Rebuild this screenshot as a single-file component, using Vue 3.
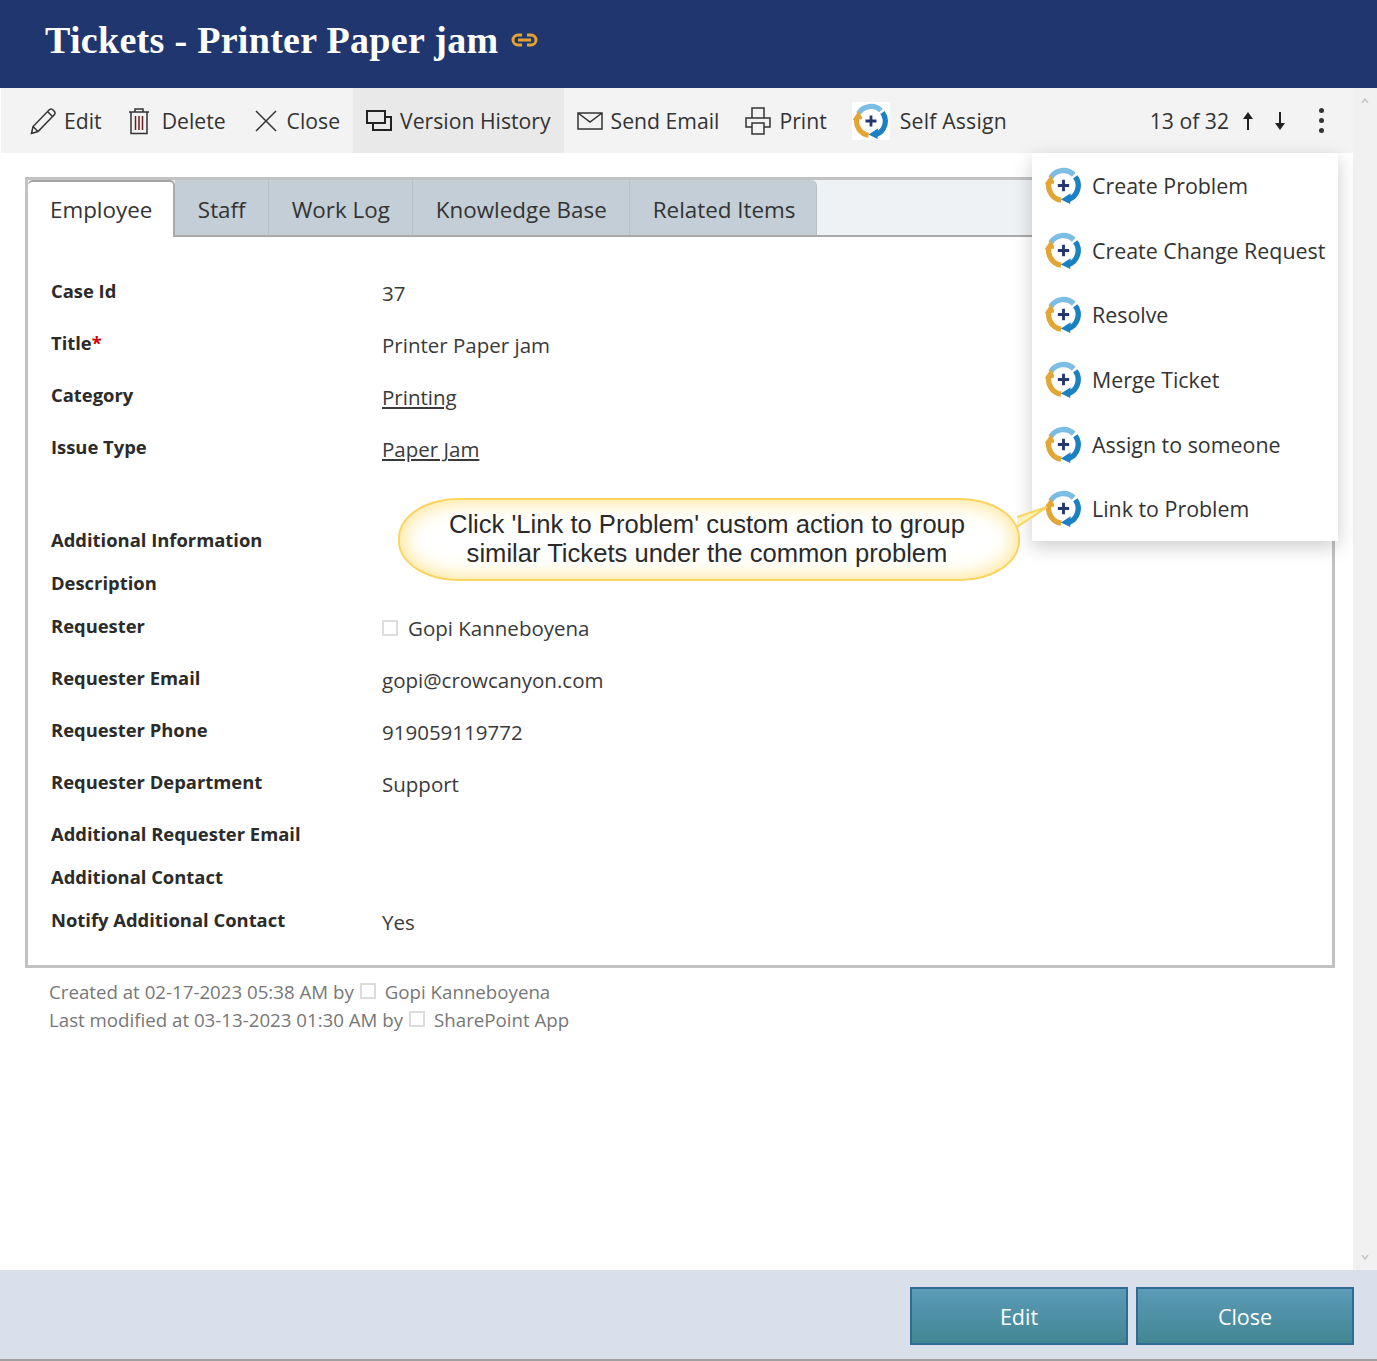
<template>
  <div class="pagina">
    <svg width="0" height="0" class="defs">
      <symbol id="anel" viewBox="0 0 36 36">
        <path d="M5.5 10.5A14.5 14.5 0 0 1 28 7.5" fill="none" stroke="#7dbde3" stroke-width="5.2" />
        <path d="M29.5 9.5A14.5 14.5 0 0 1 23 31.6" fill="none" stroke="#1b80c4" stroke-width="5.2" />
        <path d="M25 25.5L24.5 36L15.5 31.5Z" fill="#1b80c4" />
        <path d="M15.6 32.3A14.5 14.5 0 0 1 3.8 15" fill="none" stroke="#e3a635" stroke-width="5.2" />
        <path d="M-0.5 17L10 16L5.5 8Z" fill="#e3a635" />
        <circle cx="18" cy="18" r="9.5" fill="#fff" />
        <path d="M18 12.5V23.5M12.5 18H23.5" stroke="#24386f" stroke-width="2.8" />
      </symbol>
    </svg>

    <header class="cabecalho">
      <h1>Tickets - Printer Paper jam</h1>
      <svg class="elo" width="27" height="14" viewBox="0 0 27 14" fill="none" stroke="#e5a32b" stroke-width="3">
        <path d="M11 2H7a5 5 0 0 0 0 10h4M16 2h4a5 5 0 0 1 0 10h-4M7 7h13" />
      </svg>
    </header>

    <div class="meio">
      <div class="coluna">
        <nav class="barra">
          <a class="acao">
            <svg width="26" height="28" viewBox="0 0 26 28" fill="none" stroke="#333" stroke-width="1.5"><path d="M1.5 26.5L3 19.5L19.5 2.5Q21 1.5 22.5 2.5L24.5 4.5Q25.5 6 24.5 7.5L8 24.5ZM3 19.5L8 24.5M17.5 4.5L22.5 9.5" /></svg>
            Edit
          </a>
          <a class="acao lixeira">
            <svg width="22" height="28" viewBox="0 0 22 28" fill="none" stroke="#333" stroke-width="1.5"><path d="M1 5H21M7 5V2H15V5M3 5V26.5H19V5" /><path d="M7.5 9V23M11 9V23M14.5 9V23" stroke="#6b1d22" /></svg>
            Delete
          </a>
          <a class="acao fechar">
            <svg width="22" height="22" viewBox="0 0 22 22" fill="none" stroke="#333" stroke-width="1.5"><path d="M1 1L21 21M21 1L1 21" /></svg>
            Close
          </a>
          <a class="acao ativa">
            <svg width="26" height="24" viewBox="0 0 26 24" fill="none" stroke="#222" stroke-width="2"><path d="M1 2H19V14H1ZM7 14V21H25V8H19" /></svg>
            Version History
          </a>
          <a class="acao email">
            <svg width="26" height="18" viewBox="0 0 26 18" fill="none" stroke="#333" stroke-width="1.5"><path d="M1 1H25V17H1ZM1 1L13 10L25 1" /></svg>
            Send Email
          </a>
          <a class="acao">
            <svg width="26" height="28" viewBox="0 0 26 28" fill="none" stroke="#333" stroke-width="1.5"><path d="M7 11V1H19V11M7 20H1V11H25V20H19M7 16H19V27H7Z" /></svg>
            Print
          </a>
          <a class="acao assumir">
            <span class="fundo-anel"><svg width="36" height="36"><use href="#anel" /></svg></span>
            Self Assign
          </a>
          <div class="navegacao">
            <span class="contagem">13 of 32</span>
            <svg width="12" height="20" viewBox="0 0 12 20" fill="#222"><path d="M6 1L11 8H7V19H5V8H1Z" /></svg>
            <svg width="12" height="20" viewBox="0 0 12 20" fill="#222"><path d="M6 19L1 12H5V1H7V12H11Z" /></svg>
            <span class="pontos"><i></i><i></i><i></i></span>
          </div>
        </nav>

        <main class="conteudo">
          <section class="moldura">
            <div class="abas">
              <span v-for="(aba, i) in abas" :key="aba" class="aba" :class="{ selecionada: i === 0 }">{{ aba }}</span>
            </div>
            <div class="formulario">
              <div v-for="campo in campos" :key="campo.rotulo" class="linha" :class="{ vazia: !campo.valor, afastada: campo.afastada }">
                <strong class="rotulo">{{ campo.rotulo }}<em v-if="campo.obrigatorio">*</em></strong>
                <span v-if="campo.valor" class="valor">
                  <i v-if="campo.foto" class="foto"></i>
                  <u v-if="campo.link">{{ campo.valor }}</u>
                  <template v-else>{{ campo.valor }}</template>
                </span>
              </div>
            </div>
          </section>
          <div class="rodape-info">
            <p>Created at 02-17-2023 05:38 AM by<i class="foto"></i>Gopi Kanneboyena</p>
            <p>Last modified at 03-13-2023 01:30 AM by<i class="foto"></i>SharePoint App</p>
          </div>
        </main>

        <ul class="menu">
          <li v-for="item in menu" :key="item">
            <svg width="37" height="37"><use href="#anel" /></svg>
            {{ item }}
          </li>
        </ul>

        <div class="balao">
          Click 'Link to Problem' custom action to group<br />
          similar Tickets under the common problem
        </div>
        <svg class="rabo" width="32" height="22" viewBox="0 0 32 22">
          <path d="M0 11L30 1L0 21" fill="#fff1b8" stroke="#fbd35f" stroke-width="2" />
        </svg>
      </div>

      <aside class="rolagem">
        <svg width="8" height="5" viewBox="0 0 8 5" fill="none" stroke="#c4c4c4" stroke-width="1.4"><path d="M1 5L4 1L7 5" /></svg>
        <svg width="8" height="5" viewBox="0 0 8 5" fill="none" stroke="#c4c4c4" stroke-width="1.4"><path d="M1 0L4 4L7 0" /></svg>
      </aside>
    </div>

    <footer class="rodape">
      <button class="botao">Edit</button>
      <button class="botao">Close</button>
    </footer>
    <div class="tira"></div>
  </div>
</template>

<script setup>
const abas = ["Employee", "Staff", "Work Log", "Knowledge Base", "Related Items"];

const menu = [
  "Create Problem",
  "Create Change Request",
  "Resolve",
  "Merge Ticket",
  "Assign to someone",
  "Link to Problem",
];

const campos = [
  { rotulo: "Case Id", valor: "37" },
  { rotulo: "Title", valor: "Printer Paper jam", obrigatorio: true },
  { rotulo: "Category", valor: "Printing", link: true },
  { rotulo: "Issue Type", valor: "Paper Jam", link: true },
  { rotulo: "Additional Information", afastada: true },
  { rotulo: "Description" },
  { rotulo: "Requester", valor: "Gopi Kanneboyena", foto: true },
  { rotulo: "Requester Email", valor: "gopi@crowcanyon.com" },
  { rotulo: "Requester Phone", valor: "919059119772" },
  { rotulo: "Requester Department", valor: "Support" },
  { rotulo: "Additional Requester Email" },
  { rotulo: "Additional Contact" },
  { rotulo: "Notify Additional Contact", valor: "Yes" },
];
</script>

<style>
html,
body {
  margin: 0;
  background: #fff;
}
</style>

<style scoped>
.pagina {
  width: 1377px;
  height: 1361px;
  display: flex;
  flex-direction: column;
  overflow: hidden;
  font-family: "Open Sans", "Noto Sans", sans-serif;
  color: #333;
}

.defs {
  position: absolute;
}

.cabecalho {
  height: 88px;
  flex: none;
  display: flex;
  align-items: center;
  gap: 13px;
  padding: 0 0 8px 45px;
  box-sizing: border-box;
  background: #1f366f;
}
.cabecalho h1 {
  margin: 0;
  font: bold 38px "Liberation Serif", serif;
  letter-spacing: 0.3px;
  color: #fff;
}

.meio {
  flex: 1;
  display: flex;
  min-height: 0;
}
.coluna {
  position: relative;
  flex: 1;
  display: flex;
  flex-direction: column;
}

.barra {
  height: 65px;
  flex: none;
  display: flex;
  align-items: stretch;
  padding-left: 16px;
  margin-left: 1px;
  background: #f3f3f3;
  font-size: 21.2px;
}
.acao {
  display: flex;
  align-items: center;
  gap: 8px;
  padding: 0 13px;
}
.lixeira {
  gap: 12px;
}
.fechar {
  gap: 10px;
  padding-left: 14px;
}
.fechar svg {
  margin-left: 2px;
}
.email {
  gap: 8px;
}
.ativa {
  background: #e9e9e9;
}
.assumir {
  gap: 10px;
  padding-left: 12px;
  letter-spacing: 0.2px;
}
.fundo-anel {
  display: flex;
  padding: 1px;
  background: #fff;
}
.navegacao {
  margin-left: auto;
  display: flex;
  align-items: center;
  gap: 20px;
  padding-right: 29px;
}
.contagem {
  margin-right: -7px;
}
.pontos {
  display: flex;
  flex-direction: column;
  gap: 5px;
  margin-left: 13px;
}
.pontos i {
  width: 5px;
  height: 5px;
  border-radius: 50%;
  background: #333;
}

.conteudo {
  flex: 1;
  padding: 24px 18px 0 25px;
}
.moldura {
  border: 3px solid #c2c2c2;
  height: 791px;
  box-sizing: border-box;
}
.abas {
  display: flex;
  height: 57px;
  background: #eff2f5;
  border-bottom: 2px solid #a9a9a9;
  box-sizing: border-box;
  font-size: 22.4px;
}
.aba {
  display: flex;
  align-items: center;
  padding: 3px 22.5px 0;
  background: #c3ced6;
  border-right: 1px solid #b8c0c6;
}
.aba:last-child {
  padding-right: 20.5px;
  border-radius: 0 6px 0 0;
}
.selecionada {
  background: #fff;
  height: 57px;
  box-sizing: border-box;
  border-top: 2px solid #a5a5a5;
  border-right: 2px solid #a9a9a9;
  border-radius: 5px 5px 0 0;
  padding: 0 21px 0 22px;
}

.formulario {
  padding: 42px 23px 0;
}
.linha {
  display: flex;
  height: 52px;
}
.vazia {
  height: 43px;
}
.afastada {
  margin-top: 41px;
}
.rotulo {
  width: 331px;
  flex: none;
  font-size: 18.4px;
  line-height: 24px;
  color: #2b2b2b;
}
.rotulo em {
  font-style: normal;
  color: #d40000;
}
.valor {
  display: flex;
  align-items: center;
  height: 28px;
  font-size: 20.5px;
  color: #3a3a3a;
}
.foto {
  display: inline-block;
  width: 12px;
  height: 12px;
  border: 2px solid #dcdcdc;
  margin-right: 10px;
}

.rodape-info {
  padding: 10px 0 0 24px;
  font-size: 18.7px;
  color: #777;
}
.rodape-info p {
  margin: 0;
  line-height: 28px;
}
.rodape-info .foto {
  margin: 0 9px 0 6px;
}

.menu {
  position: absolute;
  top: 65px;
  left: 1032px;
  width: 306px;
  height: 388px;
  box-sizing: border-box;
  margin: 0;
  padding: 0 0 0 13px;
  list-style: none;
  background: #fff;
  box-shadow: 0 6px 18px rgba(0, 0, 0, 0.2);
  font-size: 21.4px;
}
.menu li {
  display: flex;
  align-items: center;
  gap: 10px;
  height: 64.7px;
}

.balao {
  position: absolute;
  top: 410px;
  left: 398px;
  width: 622px;
  height: 83px;
  box-sizing: border-box;
  display: flex;
  align-items: center;
  justify-content: center;
  padding: 0 4px 2px 0;
  text-align: center;
  font: 25.6px/29px "Liberation Sans", sans-serif;
  color: #2a2a2a;
  background: #fff;
  border: 2px solid #fbd35f;
  border-radius: 60px / 40px;
  box-shadow: inset 0 0 22px #ffdf7a;
}
.rabo {
  position: absolute;
  top: 418px;
  left: 1017px;
}

.rolagem {
  width: 24px;
  flex: none;
  display: flex;
  flex-direction: column;
  align-items: center;
  justify-content: space-between;
  padding: 10px 0;
  box-sizing: border-box;
  background: #f1f1f1;
}

.rodape {
  height: 89px;
  flex: none;
  display: flex;
  justify-content: flex-end;
  align-items: flex-start;
  gap: 8px;
  padding: 17px 23px 0 0;
  box-sizing: border-box;
  background: #d9dfeb;
}
.botao {
  width: 218px;
  height: 58px;
  font: 21.5px "Open Sans", sans-serif;
  color: #fff;
  background: linear-gradient(#5b9bb7, #428694);
  border: 2px solid #2e6b95;
}
.tira {
  height: 2px;
  flex: none;
  background: #a0a0a0;
}
</style>
